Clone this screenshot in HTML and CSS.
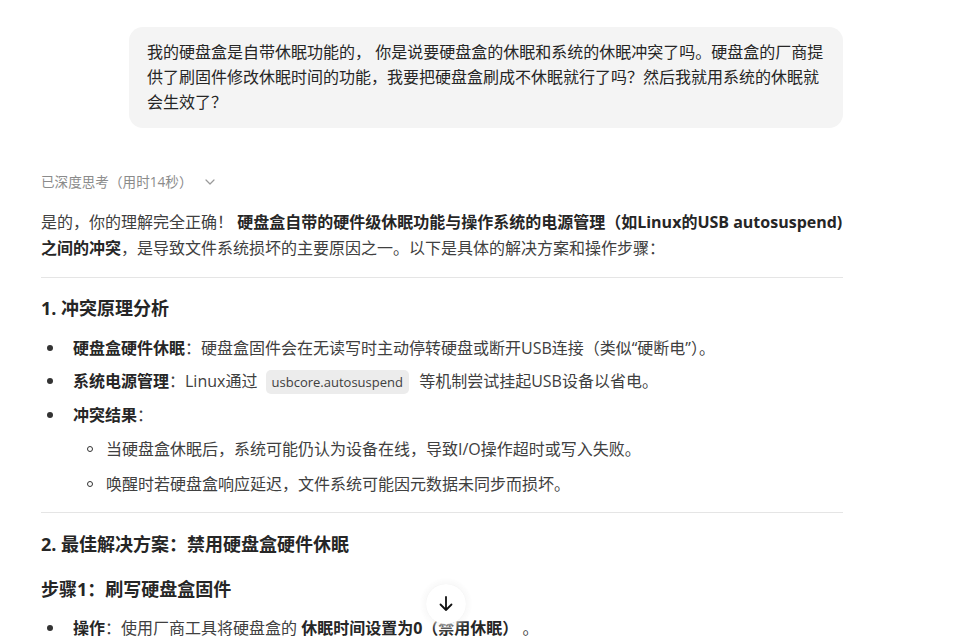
FILE: index.html
```html
<!DOCTYPE html>
<html lang="zh-CN">
<head>
<meta charset="utf-8">
<title>Chat</title>
<link rel="stylesheet" href="styles.css">
</head>
<body>
<div class="page">
  <div class="user">我的硬盘盒是自带休眠功能的， 你是说要硬盘盒的休眠和系统的休眠冲突了吗。硬盘盒的厂商提供了刷固件修改休眠时间的功能，我要把硬盘盒刷成不休眠就行了吗？然后我就用系统的休眠就会生效了？</div>

  <div class="think">已深度思考（用时14秒）<svg class="chev" width="12" height="12" viewBox="0 0 12 12"><path d="M2 4l4 4 4-4" fill="none" stroke="#9a9a9a" stroke-width="1.2" stroke-linecap="round" stroke-linejoin="round"/></svg></div>

  <div class="answer">
    <p class="lead">是的，你的理解完全正确！ <strong>硬盘盒自带的硬件级休眠功能与操作系统的电源管理（如Linux的USB autosuspend)之间的冲突</strong>，是导致文件系统损坏的主要原因之一。以下是具体的解决方案和操作步骤：</p>
    <hr class="rule">
    <h3 class="h3 first">1. 冲突原理分析</h3>
    <ul class="list">
      <li class="item"><strong>硬盘盒硬件休眠</strong>：硬盘盒固件会在无读写时主动停转硬盘或断开USB连接（类似“硬断电”）。</li>
      <li class="item"><strong>系统电源管理</strong>：Linux通过 <code class="code">usbcore.autosuspend</code> 等机制尝试挂起USB设备以省电。</li>
      <li class="item"><strong>冲突结果</strong>：
        <ul class="sub">
          <li class="subitem">当硬盘盒休眠后，系统可能仍认为设备在线，导致I/O操作超时或写入失败。</li>
          <li class="subitem">唤醒时若硬盘盒响应延迟，文件系统可能因元数据未同步而损坏。</li>
        </ul>
      </li>
    </ul>
    <hr class="rule rule2">
    <h3 class="h3 second">2. 最佳解决方案：禁用硬盘盒硬件休眠</h3>
    <h4 class="h4">步骤1：刷写硬盘盒固件</h4>
    <ul class="list list2">
      <li class="item"><strong>操作</strong>：使用厂商工具将硬盘盒的 <strong>休眠时间设置为0（禁用休眠）</strong> 。</li>
    </ul>
  </div>
</div>
<button class="scroll-btn" aria-label="scroll down"><svg width="16" height="18" viewBox="0 0 16 18"><path d="M8 2v13M2.5 9.5L8 15l5.5-5.5" fill="none" stroke="#111" stroke-width="1.8" stroke-linecap="round" stroke-linejoin="round"/></svg></button>
</body>
</html>
```
FILE: styles.css
```css
html, body {
  margin: 0;
  padding: 0;
  background: #ffffff;
  overflow: hidden;
}
body {
  font-family: "Open Sans", "Noto Sans CJK SC", sans-serif;
  color: #404040;
  font-size: 16px;
}
.page {
  width: 802px;
  padding: 27px 0 0 41px;
}
.user {
  margin-left: 88px;
  background: #f4f4f4;
  border-radius: 14px;
  padding: 13px 18px 13px 18px;
  font-size: 16px;
  line-height: 25px;
  color: #262626;
}
.think {
  margin-top: 44px;
  font-size: 13.6px;
  line-height: 20px;
  color: #8b8b8b;
  display: flex;
  align-items: center;
}
.chev {
  margin-left: 12px;
}
.answer {
  margin-top: 17px;
  font-size: 16px;
  line-height: 26px;
}
.lead {
  margin: 0;
}
strong {
  font-weight: 700;
  color: #262626;
}
.rule {
  border: 0;
  border-top: 1px solid #e5e5e5;
  margin: 16px 0 0 0;
}
.rule2 {
  margin-top: 15px;
}
.h3 {
  margin: 17px 0 0 0;
  font-size: 18px;
  line-height: 26px;
  font-weight: 700;
  color: #262626;
}
.second {
  margin-top: 18px;
}
.h4 {
  margin: 19px 0 0 0;
  font-size: 18px;
  line-height: 26px;
  font-weight: 700;
  color: #262626;
}
.list {
  list-style: none;
  margin: 14px 0 0 0;
  padding: 0 0 0 32px;
}
.list2 {
  margin-top: 13px;
}
.item {
  position: relative;
  margin-top: 7px;
}
.item:first-child {
  margin-top: 0;
}
.item::before {
  content: "";
  position: absolute;
  left: -26px;
  top: 10px;
  width: 6px;
  height: 6px;
  border-radius: 50%;
  background: #333;
}
.sub {
  list-style: none;
  margin: 8px 0 0 0;
  padding: 0 0 0 33px;
}
.subitem {
  position: relative;
  margin-top: 9px;
}
.subitem:first-child {
  margin-top: 0;
}
.subitem::before {
  content: "";
  position: absolute;
  left: -19px;
  top: 10px;
  width: 4px;
  height: 4px;
  border-radius: 50%;
  border: 1.3px solid #333;
}
.code {
  font-family: "Open Sans", "Noto Sans CJK SC", sans-serif;
  font-size: 13px;
  background: #ececec;
  border-radius: 5px;
  padding: 3px 6px;
  margin: 0 6px 0 4px;
  color: #404040;
}
.scroll-btn {
  position: fixed;
  left: 426px;
  top: 584px;
  width: 40px;
  height: 40px;
  border-radius: 50%;
  border: 0;
  background: #ffffff;
  box-shadow: 0 0 10px 2px rgba(255,255,255,0.9), 0 0 8px rgba(0,0,0,0.12), 0 0 1px rgba(0,0,0,0.15);
  display: flex;
  align-items: center;
  justify-content: center;
  padding: 0;
}
```
